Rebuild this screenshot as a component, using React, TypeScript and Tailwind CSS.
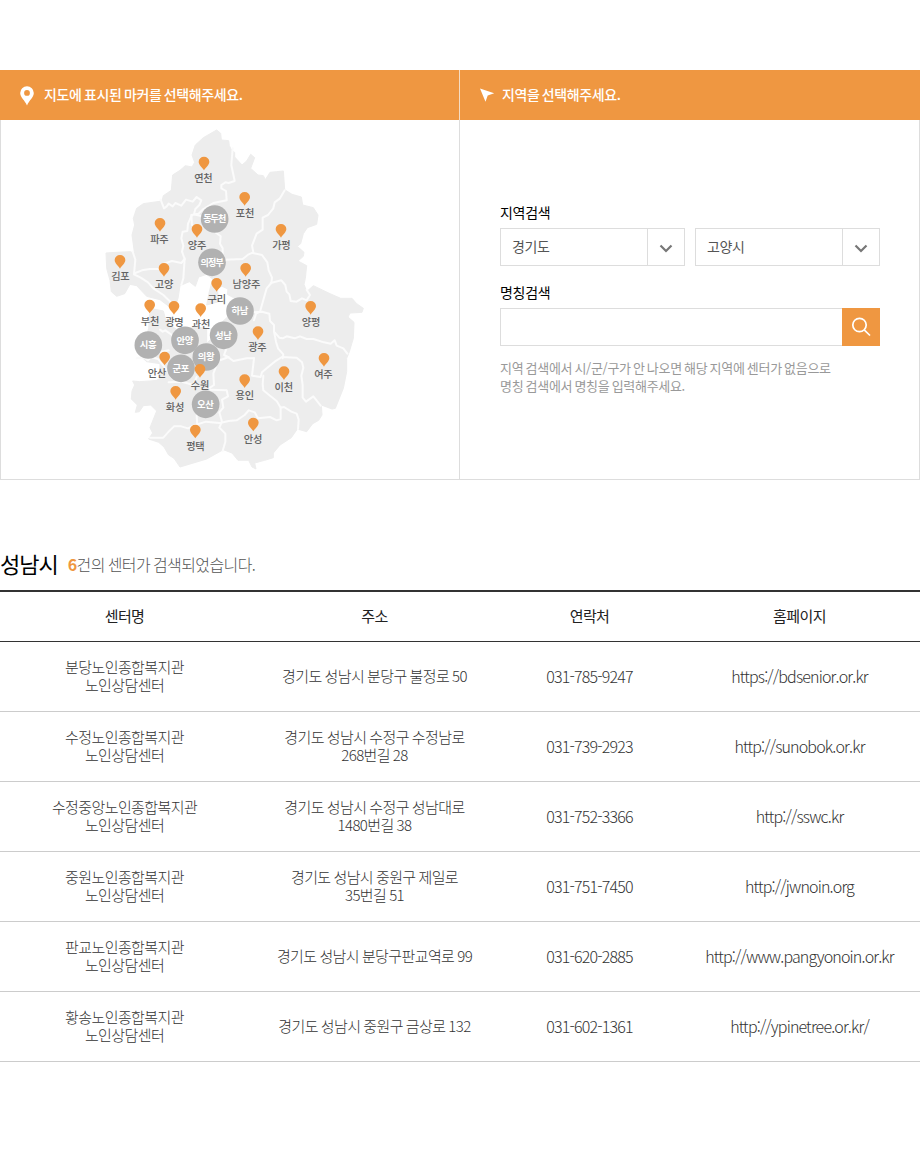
const FONT = "font-['Noto_Sans_CJK_KR','Noto_Sans_KR',sans-serif]";

type Point = [string, number, number];

// Marker positions in the map's own units (3 units = 1px)
const markers: Point[] = [
  ['연천', 312, 113],
  ['포천', 434, 219],
  ['파주', 180, 297],
  ['양주', 291, 315],
  ['가평', 543, 315],
  ['김포', 60, 408],
  ['고양', 192, 432],
  ['남양주', 437, 432],
  ['구리', 350, 477],
  ['부천', 149, 542],
  ['광명', 222, 546],
  ['과천', 302, 553],
  ['양평', 632, 546],
  ['광주', 474, 622],
  ['안산', 194, 698],
  ['여주', 672, 702],
  ['수원', 300, 735],
  ['이천', 552, 742],
  ['용인', 434, 766],
  ['화성', 227, 801],
  ['안성', 460, 896],
  ['평택', 286, 917],
];

const labelShift: Record<string, number> = {
  연천: -2, 포천: 1, 파주: -2, 양주: 0, 가평: 1, 김포: 1, 고양: 0, 남양주: 2, 구리: 0, 부천: 1,
  광명: 1, 과천: 1, 양평: 1, 광주: -2, 안산: -23, 여주: -2, 수원: 0, 이천: -1, 용인: 0, 화성: -2, 안성: -1, 평택: 0,
};

const circles: Point[] = [
  ['동두천', 344, 282],
  ['의정부', 336, 412],
  ['하남', 420, 558],
  ['성남', 371, 631],
  ['안양', 255, 646],
  ['시흥', 145, 660],
  ['의왕', 319, 696],
  ['군포', 243, 730],
  ['오산', 317, 838],
];

const LAND =
  'M350 15 L362 25 364 45 386 47 388 62 396 78 404 82 404 96 426 120 440 108 452 88 464 98 452 130 474 150 490 152 496 164 510 142 530 140 550 138 554 194 576 208 604 216 608 240 640 248 654 270 650 298 622 308 610 326 602 356 592 364 612 382 610 394 594 408 620 422 616 460 612 478 620 500 640 482 690 506 722 520 756 520 770 536 790 550 786 562 750 564 744 576 762 592 760 640 748 680 740 700 740 740 730 790 706 850 696 852 664 840 666 870 656 886 638 896 620 920 592 912 574 938 540 960 520 984 520 998 494 1006 464 1014 468 1032 456 1026 446 1006 414 1006 396 984 370 974 320 1002 240 1026 222 1000 206 990 192 966 176 952 146 942 158 924 150 908 170 858 152 840 130 842 118 860 106 862 112 840 94 822 96 798 104 780 98 768 118 770 150 768 170 766 180 760 180 716 140 710 118 690 140 630 146 610 150 560 160 552 190 558 196 580 210 600 234 616 250 612 284 606 320 610 320 655 336 640 332 612 350 606 400 560 404 520 382 508 384 492 366 484 352 490 356 530 320 540 328 500 338 462 320 448 296 456 286 484 268 470 240 482 234 520 222 556 180 524 140 514 110 482 90 478 74 506 50 514 34 500 30 466 20 430 18 384 50 382 92 380 104 388 96 330 104 300 100 280 110 250 130 236 186 228 190 212 214 196 218 150 240 136 256 122 276 126 284 112 276 90 286 60 310 38Z';

const BORDERS = [
  'M398 70 L394 120 404 168 386 174 376 172 364 180 364 190 378 198 380 226 340 234 310 252 296 266 274 270 276 300',
  'M182 224 L192 250 200 244 206 236 218 244 226 234 244 242 258 224 278 230 290 216 304 226 298 240 286 252 282 268 300 272 318 278',
  'M276 270 L264 296 262 318 248 320 244 340 250 362 246 380 254 402 244 414 216 408 192 416 176 432 150 432 126 436 106 444',
  'M98 380 L106 404 102 448 122 458 144 472 160 490 190 510 236 554',
  'M254 400 L250 460 244 480',
  'M344 320 L362 334 360 356 368 370 368 390 376 406',
  'M374 404 L428 402 446 388 460 382 456 362 470 326 488 314 488 278 504 270 520 250 524 232 540 220 554 196',
  'M458 384 L486 390 502 412 506 436 516 458 514 474 500 490 480 560 468 566 462 586',
  'M512 474 L544 466 556 480 560 500 568 508 572 528 590 530 606 520 620 526 630 510 620 494',
  'M458 562 L486 560 508 566 510 588 522 600 522 620 538 638 548 640 560 634 584 640 600 634 620 642 640 642 672 652 692 656 704 646 710 662 730 670 742 686',
  'M522 620 L528 650 534 670 550 688 548 700',
  'M462 700 L456 752 482 756 486 742 500 730 524 710 546 696 590 698 606 712 610 728 604 752 608 780 608 818 618 830 640 814 662 842',
  'M382 664 L372 690 384 696 400 708 440 700 462 700',
  'M386 696 L354 708 340 746 342 780 330 788',
  'M332 794 L380 796 384 814 366 824 370 848 358 862 366 890 358 908 376 926 376 950 368 978',
  'M490 752 L488 778 490 796 510 812 530 828 542 848 552 846 574 860 590 866 596 884 594 912',
  'M542 846 L542 882 530 886 510 876 474 880 464 862 446 856 434 870 410 886 386 888 360 894',
  'M150 938 L190 938 206 920 222 904 244 904 264 910 286 900 318 890 358 894',
  'M290 872 L292 904',
  'M180 614 L188 620 196 616 216 630',
  'M110 700 L154 696 174 702 198 732 216 760',
  'M290 756 L280 780 246 770 206 772',
  'M118 686 L144 706 160 690 184 680 206 676',
];

function RegionMap() {
  return (
    <svg width="458" height="359" viewBox="-297 -15 1374 1077" className="block" aria-label="경기도 지도">
      <path d={LAND} fill="#ededed" stroke="#ededed" strokeWidth="3" strokeLinejoin="round" />
      <g fill="none" stroke="#fbfbfb" strokeWidth="6" strokeLinejoin="round" strokeLinecap="round">
        {BORDERS.map((d) => (
          <path key={d} d={d} />
        ))}
      </g>
      {circles.map(([name, x, y]) => (
        <g key={name}>
          <circle cx={x} cy={y} r="41.5" fill="#b1b1b1" />
          <text x={x - 1} y={y + 10} textAnchor="middle" fill="#fff" fontSize={name.length > 2 ? 27 : 28} fontWeight="700" letterSpacing={name.length > 2 ? -2.5 : -1}>
            {name}
          </text>
        </g>
      ))}
      {markers.map(([name, x, y]) => (
        <g key={name}>
          <path
            transform={`translate(${x} ${y})`}
            d="M0 23 C-5 14 -16 7 -16 -3 A16 15 0 1 1 16 -3 C16 7 5 14 0 23Z"
            fill="#ef9741"
          />
          <text x={x + labelShift[name]} y={y + 57} textAnchor="middle" fill="#626262" fontSize="30.5" fontWeight="500" letterSpacing="-0.5">
            {name}
          </text>
        </g>
      ))}
    </svg>
  );
}

function Select({ value }: { value: string }) {
  return (
    <button className="flex h-[38px] w-[185px] border border-[#ddd] bg-white text-left">
      <span className="flex-1 pl-[11px] text-[14px] leading-[34px] tracking-[-0.4px] text-[#555]">{value}</span>
      <span className="flex h-full w-[37px] items-center justify-center border-l border-[#ddd]">
        <svg width="14" height="9" viewBox="0 0 14 9" fill="none" className="mt-[2px]">
          <path d="M1.5 1.5 L7 7 L12.5 1.5" stroke="#777" strokeWidth="2.2" />
        </svg>
      </span>
    </button>
  );
}

const rows = [
  { name: '분당노인종합복지관', address: ['경기도 성남시 분당구 불정로 50'], tel: '031-785-9247', url: 'https://bdsenior.or.kr' },
  { name: '수정노인종합복지관', address: ['경기도 성남시 수정구 수정남로', '268번길 28'], tel: '031-739-2923', url: 'http://sunobok.or.kr' },
  { name: '수정중앙노인종합복지관', address: ['경기도 성남시 수정구 성남대로', '1480번길 38'], tel: '031-752-3366', url: 'http://sswc.kr' },
  { name: '중원노인종합복지관', address: ['경기도 성남시 중원구 제일로', '35번길 51'], tel: '031-751-7450', url: 'http://jwnoin.org' },
  { name: '판교노인종합복지관', address: ['경기도 성남시 분당구판교역로 99'], tel: '031-620-2885', url: 'http://www.pangyonoin.or.kr' },
  { name: '황송노인종합복지관', address: ['경기도 성남시 중원구 금상로 132'], tel: '031-602-1361', url: 'http://ypinetree.or.kr/' },
];

export default function App() {
  return (
    <main lang="ko" className={`h-[1162px] w-[920px] bg-white pt-[70px] ${FONT}`}>
      <section className="flex h-[410px]">
        <div className="flex w-[460px] flex-col">
          <h2 className="flex h-[50px] items-center border-r border-[#f5dcc3] bg-[#ef9741] pl-5 text-[14px] font-medium tracking-[-0.38px] text-white [word-spacing:-1.1px]">
            <svg width="14" height="20" viewBox="0 0 14 20" className="mt-[2px] mr-[10px]">
              <path fillRule="evenodd" fill="#fff" d="M7 0.3a6.8 6.8 0 0 0-6.8 6.8C.2 11.5 4.8 14.300 7 19.500 9.200 14.300 13.800 11.500 13.800 7.100A6.800 6.800 0 0 0 7 .3ZM7 9.800a2.900 2.900 0 1 1 0-5.800 2.900 2.900 0 0 1 0 5.800Z" />
            </svg>
            <span className="-mt-[2px]">지도에 표시된 마커를 선택해주세요.</span>
          </h2>
          <div className="h-[360px] border-x border-b border-[#ddd]">
            <RegionMap />
          </div>
        </div>
        <div className="flex w-[460px] flex-col">
          <h2 className="flex h-[50px] items-center bg-[#ef9741] pl-5 text-[14px] font-medium tracking-[-0.4px] text-white [word-spacing:-1.1px]">
            <svg width="15" height="14" viewBox="0 0 15 14" className="mr-[7px]">
              <path d="M0 0.500 L14.200 5.300 L7.700 7.500 L5.500 13.800 Z" fill="#fff" />
            </svg>
            <span className="-mt-[2px]">지역을 선택해주세요.</span>
          </h2>
          <div className="flex h-[360px] flex-col border-r border-b border-[#ddd] pt-[80px] pl-10">
            <label className="h-7 text-[14px] leading-6 font-normal tracking-[-0.3px] text-black">지역검색</label>
            <div className="flex gap-[10px]">
              <Select value="경기도" />
              <Select value="고양시" />
            </div>
            <label className="mt-[14px] h-7 text-[14px] leading-6 font-normal tracking-[-0.3px] text-black">명칭검색</label>
            <div className="flex h-[38px] w-[380px]">
              <input aria-label="명칭검색" className="w-[342px] border border-r-0 border-[#ddd] px-3 outline-none" />
              <button aria-label="검색" className="flex w-[38px] items-center justify-center bg-[#ef9741]">
                <svg width="20" height="20" viewBox="0 0 20 20" fill="none" stroke="#fff" strokeWidth="1.7">
                  <circle cx="8.500" cy="8" r="6.700" />
                  <path d="M13.200 12.800 L19 18.500" />
                </svg>
              </button>
            </div>
            <p className="mt-[13px] text-[13px] leading-[18px] tracking-[-0.3px] text-[#999] [word-spacing:-1.1px]">
              지역 검색에서 시/군/구가 안 나오면 해당 지역에 센터가 없음으로
              <br />
              명칭 검색에서 명칭을 입력해주세요.
            </p>
          </div>
        </div>
      </section>

      <section className="pt-[65px]">
        <div className="flex h-[45px] items-start">
          <strong className="text-[22px] leading-[36px] font-normal tracking-[-1px] text-black">성남시</strong>
          <span className="ml-[10px] text-[16px] leading-[38px] font-light tracking-[-0.6px] text-[#555] [word-spacing:-1px]">
            <b className="font-bold text-[#ef9741]">6</b>건의 센터가 검색되었습니다.
          </span>
        </div>
        <table className="w-full table-fixed border-collapse text-center text-[15px] leading-[18px] tracking-[-0.6px]">
          <colgroup>
            <col className="w-[250px]" />
            <col className="w-[250px]" />
            <col className="w-[180px]" />
            <col className="w-[240px]" />
          </colgroup>
          <thead>
            <tr className="h-[50px] border-t-2 border-b border-[#333] text-[#222]">
              {['센터명', '주소', '연락처', '홈페이지'].map((h) => (
                <th key={h} className="p-0 pr-px font-normal">{h}</th>
              ))}
            </tr>
          </thead>
          <tbody className="font-light text-[#333]">
            {rows.map((r) => (
              <tr key={r.name} className="h-[70px] border-b border-[#ccc]">
                <td className="p-0 pr-px">
                  {r.name}
                  <br />
                  노인상담센터
                </td>
                <td className="p-0 pr-px [word-spacing:-0.7px]">
                  {r.address.map((line) => (
                    <span key={line} className="block">{line}</span>
                  ))}
                </td>
                <td className="p-0 pr-px pb-px text-[16px] tracking-[-0.8px]">{r.tel}</td>
                <td className="p-0 pr-px pb-px text-[16px] tracking-[-0.85px] [font-feature-settings:'calt'_0]"><a>{r.url}</a></td>
              </tr>
            ))}
          </tbody>
        </table>
      </section>
    </main>
  );
}
